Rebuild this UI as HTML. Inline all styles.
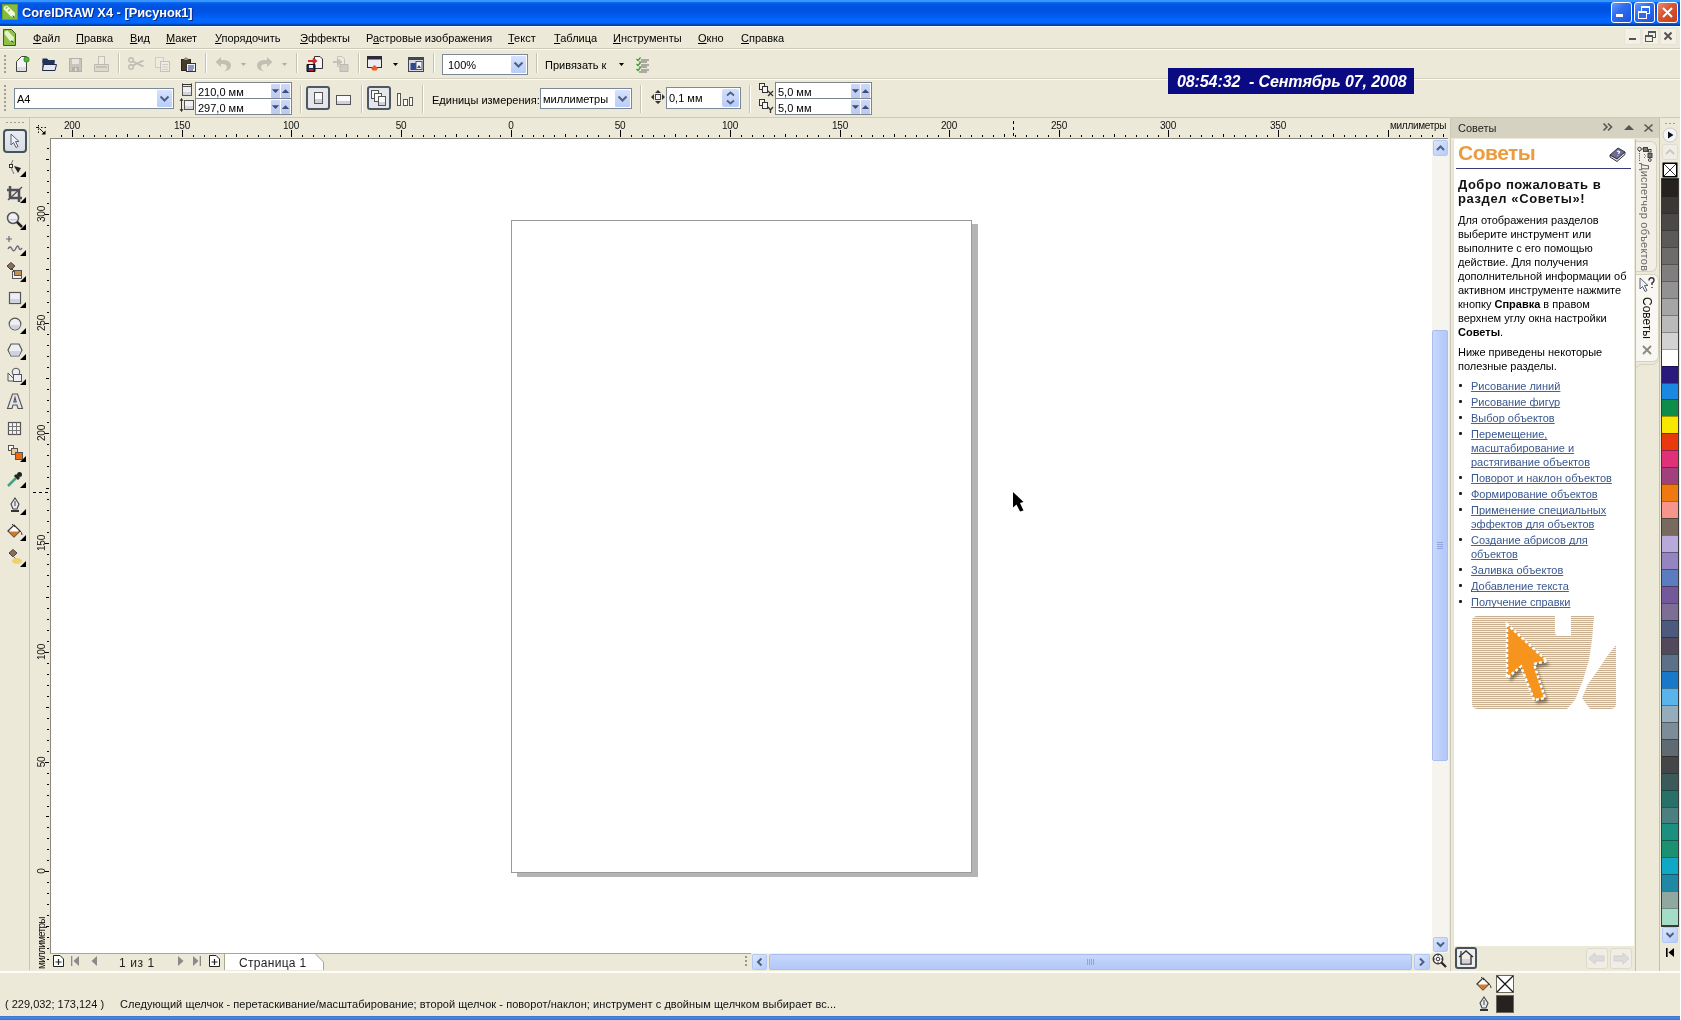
<!DOCTYPE html>
<html><head><meta charset="utf-8">
<style>
*{margin:0;padding:0;box-sizing:border-box}
html,body{width:1681px;height:1020px;overflow:hidden;background:#fff}
body{position:relative;font-family:"Liberation Sans",sans-serif;font-size:11px;color:#000;line-height:1}
.a{position:absolute}
svg{position:absolute;overflow:visible}
.t{position:absolute;white-space:nowrap;line-height:1;will-change:transform}
.rul b{will-change:transform}
#title{left:0;top:0;width:1680px;height:26px;background:linear-gradient(#3a96ff 0,#3a96ff 1.5px,#0a68ee 2.5px,#0058e6 4px,#0052df 8px,#0054e4 12px,#005cf2 16px,#0066ff 19px,#0066fd 23px,#0a3a9a 25px,#0a3a9a 26px)}
.menu .t{top:33px}
.sepv{position:absolute;width:2px;border-left:1px solid #c6c3b3;border-right:1px solid #fff}
.rul i{position:absolute;background:#000;display:block}
.rul b.hl{position:absolute;top:121px;width:40px;text-align:center;font-weight:normal;font-size:10px;line-height:10px;letter-spacing:-0.2px;color:#111}
.rul b.vl{position:absolute;left:22px;width:40px;height:10px;text-align:center;font-weight:normal;font-size:10px;line-height:10px;letter-spacing:-0.2px;color:#111;transform-origin:20px 5px;transform:translate(0,15px) rotate(-90deg)}
.spin{position:absolute;background:#fff;border:1px solid #8c9cb8}
.sbtn{position:absolute;background:#c5d3f6;border-radius:1px}
.combo{position:absolute;background:#fff;border:1px solid #7f9db9}
.cbtn{position:absolute;background:#c1d3fb;border-radius:1px}
.docker .t{left:1458px;font-size:11px;color:#000}
.links .t{left:1471px;font-size:11px;color:#3a5890;text-decoration:underline;text-decoration-color:#4e6290;text-decoration-skip-ink:none}
.links b{position:absolute;left:1459px;width:3px;height:3px;background:#222;border-radius:1px}
u{text-decoration-skip-ink:none}

</style></head><body>
<div class="a" style="left:0;top:0;width:1680px;height:1016px;background:#ece9d8"></div>
<div id="title" class="a"></div>
<div class="a" style="left:1680px;top:0;width:1px;height:1020px;background:#fff"></div>
<div class="a" style="left:0;top:1016px;width:1680px;height:4px;background:linear-gradient(#3a64b0 0,#4a8ae6 1px,#3f85e4 2px,#2f78dc 4px)"></div>
<!-- title -->
<svg style="left:2px;top:4px" width="16" height="16" viewBox="0 0 16 16"><rect x="0.5" y="0.5" width="15" height="15" fill="#86bc3e" stroke="#6a9e2c"/><path d="M2 3 L5 1.5 L13 9 L12.5 13 L9 12.5 L1.5 5 Z" fill="#f4f8e0"/><path d="M3.5 4.5 L5.5 3 M6 7 L8 5.5" stroke="#86bc3e" stroke-width="1.2"/><path d="M10.5 11 L13 13.5 L11 13.2Z" fill="#2a4a10"/></svg>
<div class="t" style="left:22px;top:7px;color:#fff;font-size:12.8px;font-weight:bold;text-shadow:1px 1px 0 #0a2a8a">CorelDRAW X4 - [Рисунок1]</div>
<div class="a" style="left:1611px;top:2px;width:21px;height:21px;background:linear-gradient(135deg,#6d9af8 0,#2f6df0 40%,#1a55dd 100%);border:1px solid #fff;border-radius:3px"></div><div class="a" style="left:1616px;top:14px;width:7px;height:3px;background:#fff"></div><div class="a" style="left:1634px;top:2px;width:21px;height:21px;background:linear-gradient(135deg,#6d9af8 0,#2f6df0 40%,#1a55dd 100%);border:1px solid #fff;border-radius:3px"></div><svg style="left:1634px;top:2px" width="21" height="21" viewBox="0 0 21 21"><rect x="7.5" y="4.5" width="8" height="7" fill="none" stroke="#fff" stroke-width="1"/><rect x="7" y="4" width="9" height="2" fill="#fff"/><rect x="4.5" y="9.5" width="8" height="7" fill="#3567e8" stroke="#fff" stroke-width="1"/><rect x="4" y="9" width="9" height="2" fill="#fff"/></svg><div class="a" style="left:1657px;top:2px;width:21px;height:21px;background:linear-gradient(135deg,#e88a70 0,#d9532f 45%,#c2401d 100%);border:1px solid #fff;border-radius:3px"></div><svg style="left:1657px;top:2px" width="21" height="21" viewBox="0 0 21 21"><path d="M6 6 L15 15 M15 6 L6 15" stroke="#fff" stroke-width="2"/></svg>
<!-- menu bar -->
<div class="a" style="left:0;top:26px;width:1680px;height:1px;background:#ecfcff"></div>
<svg style="left:3px;top:29px" width="13" height="17" viewBox="0 0 13 17"><path d="M0.5 0.5 H8.5 L12.5 4.5 V16.5 H0.5 Z" fill="#8cc04a" stroke="#3e5a1e"/><path d="M2 2.5 L4.5 1.5 L11 8.5 L10.5 13 L7 12 L1.5 5Z" fill="#e6f2c8"/><path d="M8.5 11 L11 13.5 L8.5 13Z" fill="#1e3a0a"/></svg>
<div class="menu">
<div class="t" style="left:33px"><u>Ф</u>айл</div>
<div class="t" style="left:76px"><u>П</u>равка</div>
<div class="t" style="left:130px"><u>В</u>ид</div>
<div class="t" style="left:166px"><u>М</u>акет</div>
<div class="t" style="left:215px"><u>У</u>порядочить</div>
<div class="t" style="left:300px"><u>Э</u>ффекты</div>
<div class="t" style="left:366px">Р<u>а</u>стровые изображения</div>
<div class="t" style="left:508px"><u>Т</u>екст</div>
<div class="t" style="left:554px"><u>Т</u>аблица</div>
<div class="t" style="left:613px"><u>И</u>нструменты</div>
<div class="t" style="left:698px"><u>О</u>кно</div>
<div class="t" style="left:741px"><u>С</u>правка</div>
</div>
<div class="a" style="left:1624px;top:28px;width:17px;height:17px;background:#f3f1e6;border:1px solid #e6e3d6;border-radius:2px"></div><div class="a" style="left:1629px;top:38px;width:7px;height:2px;background:#545454"></div><div class="a" style="left:1642px;top:28px;width:17px;height:17px;background:#f3f1e6;border:1px solid #e6e3d6;border-radius:2px"></div><svg style="left:1642px;top:28px" width="17" height="17" viewBox="0 0 17 17"><rect x="6.5" y="3.5" width="7" height="6" fill="none" stroke="#545454"/><rect x="6" y="3" width="8" height="2" fill="#545454"/><rect x="3.5" y="7.5" width="7" height="6" fill="#f3f1e6" stroke="#545454"/><rect x="3" y="7" width="8" height="2" fill="#545454"/></svg><div class="a" style="left:1660px;top:28px;width:17px;height:17px;background:#f3f1e6;border:1px solid #e6e3d6;border-radius:2px"></div><svg style="left:1660px;top:28px" width="17" height="17" viewBox="0 0 17 17"><path d="M4.5 4.5 L11.5 11.5 M11.5 4.5 L4.5 11.5" stroke="#545454" stroke-width="2"/></svg>
<div class="a" style="left:0;top:48px;width:1680px;height:1px;background:#cdcab9"></div>
<div class="a" style="left:0;top:49px;width:1680px;height:1px;background:#fbfaf5"></div>
<!-- toolbar 1 -->
<div class="a" style="left:4px;top:55px;width:2px;height:2px;background:#a19e8f"></div><div class="a" style="left:4px;top:59px;width:2px;height:2px;background:#a19e8f"></div><div class="a" style="left:4px;top:63px;width:2px;height:2px;background:#a19e8f"></div><div class="a" style="left:4px;top:67px;width:2px;height:2px;background:#a19e8f"></div><div class="a" style="left:4px;top:71px;width:2px;height:2px;background:#a19e8f"></div><svg style="left:16px;top:56px" width="14" height="16" viewBox="0 0 14 16"><path d="M0.5 5.5 L5.5 0.5 H10.5 V15.5 H0.5Z" fill="#f4f4f6" stroke="#404040"/><path d="M1 11 H10 V15 H1Z" fill="#dcdce4"/><circle cx="10.5" cy="3.5" r="3" fill="#3aa02a"/><circle cx="10.5" cy="3.5" r="1.5" fill="#55c040"/></svg><svg style="left:42px;top:57px" width="15" height="14" viewBox="0 0 15 14"><path d="M0.5 1.5 H5 L6.5 3 H12.5 V6 H0.5Z" fill="#1c2b4c"/><path d="M0.5 3 H12.5 V13.5 H0.5Z" fill="#22345a"/><path d="M1.5 7.5 H14.5 L13 13.5 H0.5Z" fill="#e6e6f0" stroke="#1c2b4c"/></svg><svg style="left:69px;top:58px" width="13" height="14" viewBox="0 0 13 14"><rect x="0.5" y="0.5" width="12" height="13" fill="#c8c6bc" stroke="#b4b2a8"/><rect x="3" y="1" width="7" height="5" fill="#e8e6dc"/><rect x="3" y="9" width="7" height="4" fill="#b4b2a8"/><rect x="6" y="10" width="1.5" height="3" fill="#e8e6dc"/></svg><svg style="left:94px;top:56px" width="15" height="16" viewBox="0 0 15 16"><rect x="4.5" y="0.5" width="6" height="8" fill="#eeece2" stroke="#c4c2b6"/><path d="M0.5 8.5 H14.5 V15.5 H0.5Z" fill="#dddbd0" stroke="#bcbab0"/><rect x="2" y="10" width="11" height="2" fill="#c4c2b6"/></svg><div class="a" style="left:118px;top:53px;width:1px;height:20px;background:#c5c2b1"></div><div class="a" style="left:119px;top:53px;width:1px;height:20px;background:#fff"></div><svg style="left:128px;top:57px" width="16" height="13" viewBox="0 0 16 13"><circle cx="3" cy="3" r="2.3" fill="none" stroke="#bdbbb0" stroke-width="1.4"/><circle cx="3" cy="10" r="2.3" fill="none" stroke="#bdbbb0" stroke-width="1.4"/><path d="M5 4.5 L15.5 9.5 M5 8.5 L15.5 3.5" stroke="#bdbbb0" stroke-width="1.5"/></svg><svg style="left:155px;top:57px" width="15" height="15" viewBox="0 0 15 15"><rect x="0.5" y="0.5" width="8" height="10" fill="#eeece2" stroke="#cfcdc2"/><rect x="5.5" y="4.5" width="9" height="10" fill="#eeece2" stroke="#c4c2b6"/><path d="M7 7.5H13M7 10H13M7 12.5H13" stroke="#cfcdc2"/></svg><svg style="left:181px;top:57px" width="15" height="15" viewBox="0 0 15 15"><rect x="0.5" y="2.5" width="9" height="11" fill="#4a3c2c" stroke="#2c2418"/><path d="M2.5 3 Q5 -1 7.5 3Z" fill="#f0f0f0" stroke="#333" stroke-width="0.8"/><rect x="5.5" y="6.5" width="9" height="8" fill="#f4f4f8" stroke="#333"/><path d="M7 9H13M7 11H13M7 13H12" stroke="#2a3a80" stroke-width="1"/></svg><div class="a" style="left:205px;top:53px;width:1px;height:20px;background:#c5c2b1"></div><div class="a" style="left:206px;top:53px;width:1px;height:20px;background:#fff"></div><svg style="left:215px;top:56px" width="17" height="16" viewBox="0 0 17 16"><path d="M6 1 L0.5 6 L6 11 V8 Q12 7.5 12 11.5 Q11.5 14.5 9 15.5 Q16.5 14 16 9 Q15.5 3.5 6 4Z" fill="#c2c0b4"/></svg><svg style="left:241px;top:63px" width="6" height="4" viewBox="0 0 6 4"><path d="M0 0 H5 L2.5 3Z" fill="#b0ae9f"/></svg><svg style="left:256px;top:56px" width="17" height="16" viewBox="0 0 17 16"><path d="M11 1 L16.5 6 L11 11 V8 Q5 7.5 5 11.5 Q5.5 14.5 8 15.5 Q0.5 14 1 9 Q1.5 3.5 11 4Z" fill="#c2c0b4"/></svg><svg style="left:282px;top:63px" width="6" height="4" viewBox="0 0 6 4"><path d="M0 0 H5 L2.5 3Z" fill="#b0ae9f"/></svg><div class="a" style="left:296px;top:53px;width:1px;height:20px;background:#c5c2b1"></div><div class="a" style="left:297px;top:53px;width:1px;height:20px;background:#fff"></div><svg style="left:306px;top:56px" width="17" height="16" viewBox="0 0 17 16"><path d="M8.5 0.5 H14 L16.5 3 V12.5 H8.5Z" fill="#f4f4f6" stroke="#333"/><path d="M1 8.5 H9 V15.5 H1Z" fill="#203060" stroke="#111"/><rect x="3" y="9" width="4" height="3" fill="#f0f0f0"/><rect x="3" y="13" width="4" height="2" fill="#c02020"/><path d="M2 5 H9 M7 2.5 L10 5 L7 7.5" stroke="#d02828" stroke-width="2" fill="none"/></svg><svg style="left:332px;top:56px" width="17" height="16" viewBox="0 0 17 16"><path d="M5.5 0.5 H10 L12.5 3 V10.5 H5.5Z" fill="#eeece2" stroke="#c4c2b6"/><path d="M8 8.5 H16 V15.5 H8Z" fill="#cfcdc2" stroke="#bcbab0"/><path d="M1 6 H8 M6 3.5 L9 6 L6 8.5" stroke="#c4c2b6" stroke-width="2" fill="none"/></svg><div class="a" style="left:358px;top:53px;width:1px;height:20px;background:#c5c2b1"></div><div class="a" style="left:359px;top:53px;width:1px;height:20px;background:#fff"></div><svg style="left:367px;top:56px" width="15" height="15" viewBox="0 0 15 15"><rect x="0.5" y="0.5" width="14" height="11" fill="#ececf2" stroke="#2a2a3a"/><rect x="1" y="1" width="13" height="2.5" fill="#2a2a3a"/><path d="M4 12 L7.5 9 L11 12 L9.5 14.5 H5.5Z" fill="#ee5a2a"/></svg><svg style="left:393px;top:63px" width="6" height="4" viewBox="0 0 6 4"><path d="M0 0 H5 L2.5 3Z" fill="#000"/></svg><svg style="left:408px;top:57px" width="16" height="15" viewBox="0 0 16 15"><rect x="0.5" y="0.5" width="15" height="14" fill="#d8d8e4" stroke="#404858"/><rect x="1" y="1" width="14" height="2" fill="#404858"/><rect x="2.5" y="6" width="6" height="7" fill="#2e4a8a"/><rect x="8" y="4.5" width="6" height="8" fill="#f4f4f8" stroke="#555"/><path d="M9 11 L11 8 L13 11Z" fill="#2e4a8a"/></svg><div class="a" style="left:433px;top:53px;width:1px;height:20px;background:#c5c2b1"></div><div class="a" style="left:434px;top:53px;width:1px;height:20px;background:#fff"></div><div class="a" style="left:442px;top:54px;width:86px;height:21px;background:#fff;border:1px solid #7c8898"></div><div class="a" style="left:511px;top:56px;width:15px;height:17px;background:linear-gradient(#d7e2fd,#b8cdf8);border-radius:1px"></div><svg style="left:511px;top:56px" width="15" height="17" viewBox="0 0 15 17"><path d="M3.5 6.5 L7.5 10.5 L11.5 6.5" fill="none" stroke="#4d6185" stroke-width="2"/></svg><div class="t" style="left:448px;top:60px">100%</div><div class="a" style="left:536px;top:53px;width:1px;height:20px;background:#c5c2b1"></div><div class="a" style="left:537px;top:53px;width:1px;height:20px;background:#fff"></div><div class="t" style="left:545px;top:60px">Привязать к</div><svg style="left:619px;top:63px" width="6" height="4" viewBox="0 0 6 4"><path d="M0 0 H5 L2.5 3Z" fill="#000"/></svg><svg style="left:636px;top:57px" width="13" height="16" viewBox="0 0 13 16"><path d="M0.5 2 L2 3.5 L4.5 0.5 M0.5 7 L2 8.5 L4.5 5.5 M0.5 12 L2 13.5 L4.5 10.5" stroke="#3c9a32" fill="none" stroke-width="1.2"/><path d="M5 3H13M3 5H11M5 8H13M3 10H11M5 13H13M3 15H11" stroke="#6a6a6a" stroke-width="1"/></svg>
<div class="a" style="left:0;top:78px;width:1680px;height:1px;background:#d3d0bf"></div>
<div class="a" style="left:0;top:79px;width:1680px;height:1px;background:#fbfaf5"></div>
<!-- toolbar 2 -->
<div class="a" style="left:4px;top:85px;width:2px;height:2px;background:#a19e8f"></div><div class="a" style="left:4px;top:89px;width:2px;height:2px;background:#a19e8f"></div><div class="a" style="left:4px;top:93px;width:2px;height:2px;background:#a19e8f"></div><div class="a" style="left:4px;top:97px;width:2px;height:2px;background:#a19e8f"></div><div class="a" style="left:4px;top:101px;width:2px;height:2px;background:#a19e8f"></div><div class="a" style="left:4px;top:105px;width:2px;height:2px;background:#a19e8f"></div><div class="a" style="left:4px;top:109px;width:2px;height:2px;background:#a19e8f"></div><div class="a" style="left:14px;top:88px;width:160px;height:21px;background:#fff;border:1px solid #7c8898"></div><div class="a" style="left:157px;top:90px;width:15px;height:17px;background:linear-gradient(#d7e2fd,#b8cdf8);border-radius:1px"></div><svg style="left:157px;top:90px" width="15" height="17" viewBox="0 0 15 17"><path d="M3.5 6.5 L7.5 10.5 L11.5 6.5" fill="none" stroke="#4d6185" stroke-width="2"/></svg><div class="t" style="left:17px;top:94px">A4</div><svg style="left:181px;top:83px" width="12" height="13" viewBox="0 0 12 13"><path d="M1.5 0.5 V3 M10.5 0.5 V3 M1.5 1.5 H10.5" stroke="#333"/><rect x="1.5" y="3.5" width="9" height="9" fill="#f0f0f0" stroke="#555"/><rect x="2" y="9" width="8" height="3" fill="#d4d4dc"/></svg><svg style="left:180px;top:98px" width="14" height="14" viewBox="0 0 14 14"><path d="M1.5 1 V13 M0 3 L1.5 0.5 L3 3 M0 11 L1.5 13.5 L3 11" stroke="#333" fill="none"/><rect x="4.5" y="2.5" width="9" height="9" fill="#f0f0f0" stroke="#555"/><rect x="5" y="8" width="8" height="3" fill="#d4d4dc"/></svg><div class="a" style="left:195px;top:82px;width:97px;height:33px;background:#fff;border:1px solid #7c8490"></div><div class="a" style="left:196px;top:98px;width:95px;height:1px;background:#7c8490"></div><div class="a" style="left:271px;top:84px;width:9px;height:14px;background:linear-gradient(#cdd8f6,#bccaf0);border-radius:1px"></div><div class="a" style="left:281px;top:84px;width:9px;height:14px;background:linear-gradient(#cdd8f6,#bccaf0);border-radius:1px"></div><svg style="left:271px;top:84px" width="9" height="14" viewBox="0 0 9 14"><path d="M0.8 5.2 H8.2 L4.5 9Z" fill="#3a4f80"/></svg><svg style="left:281px;top:84px" width="9" height="14" viewBox="0 0 9 14"><path d="M0.8 9 H8.2 L4.5 5.2Z" fill="#3a4f80"/></svg><div class="t" style="left:198px;top:87px">210,0 мм</div><div class="a" style="left:271px;top:100px;width:9px;height:14px;background:linear-gradient(#cdd8f6,#bccaf0);border-radius:1px"></div><div class="a" style="left:281px;top:100px;width:9px;height:14px;background:linear-gradient(#cdd8f6,#bccaf0);border-radius:1px"></div><svg style="left:271px;top:100px" width="9" height="14" viewBox="0 0 9 14"><path d="M0.8 5.2 H8.2 L4.5 9Z" fill="#3a4f80"/></svg><svg style="left:281px;top:100px" width="9" height="14" viewBox="0 0 9 14"><path d="M0.8 9 H8.2 L4.5 5.2Z" fill="#3a4f80"/></svg><div class="t" style="left:198px;top:103px">297,0 мм</div><div class="a" style="left:300px;top:85px;width:1px;height:28px;background:#c5c2b1"></div><div class="a" style="left:301px;top:85px;width:1px;height:28px;background:#fff"></div><div class="a" style="left:306px;top:86px;width:24px;height:24px;background:#e4e6ea;border:2px solid #4c5866;border-radius:3px"></div><svg style="left:306px;top:86px" width="24" height="24" viewBox="0 0 24 24"><rect x="8.5" y="6.5" width="8" height="11" fill="#fafafa" stroke="#555"/><rect x="9" y="13" width="7" height="4" fill="#d0d0d8"/></svg><svg style="left:336px;top:94px" width="15" height="12" viewBox="0 0 15 12"><rect x="0.5" y="1.5" width="14" height="9" fill="#fafafa" stroke="#555"/><rect x="1" y="7" width="13" height="3" fill="#d0d0d8"/></svg><div class="a" style="left:361px;top:85px;width:1px;height:28px;background:#c5c2b1"></div><div class="a" style="left:362px;top:85px;width:1px;height:28px;background:#fff"></div><div class="a" style="left:367px;top:86px;width:24px;height:24px;background:#e4e6ea;border:2px solid #4c5866;border-radius:3px"></div><svg style="left:367px;top:86px" width="24" height="24" viewBox="0 0 24 24"><rect x="4.5" y="4.5" width="7" height="8" fill="#fafafa" stroke="#555"/><rect x="7.5" y="7.5" width="7" height="8" fill="#fafafa" stroke="#555"/><rect x="11.5" y="10.5" width="7" height="9" fill="#fafafa" stroke="#555"/><rect x="12" y="16" width="6" height="3" fill="#d0d0d8"/></svg><svg style="left:397px;top:93px" width="16" height="13" viewBox="0 0 16 13"><rect x="0.5" y="0.5" width="3" height="12" fill="#fafafa" stroke="#555"/><rect x="6.5" y="6.5" width="4" height="6" fill="#fafafa" stroke="#555"/><rect x="12.5" y="4.5" width="3" height="8" fill="#fafafa" stroke="#555"/></svg><div class="a" style="left:422px;top:85px;width:1px;height:28px;background:#c5c2b1"></div><div class="a" style="left:423px;top:85px;width:1px;height:28px;background:#fff"></div><div class="t" style="left:432px;top:95px">Единицы измерения:</div><div class="a" style="left:540px;top:88px;width:92px;height:21px;background:#fff;border:1px solid #7c8898"></div><div class="a" style="left:615px;top:90px;width:15px;height:17px;background:linear-gradient(#d7e2fd,#b8cdf8);border-radius:1px"></div><svg style="left:615px;top:90px" width="15" height="17" viewBox="0 0 15 17"><path d="M3.5 6.5 L7.5 10.5 L11.5 6.5" fill="none" stroke="#4d6185" stroke-width="2"/></svg><div class="t" style="left:543px;top:94px">миллиметры</div><div class="a" style="left:640px;top:85px;width:1px;height:28px;background:#c5c2b1"></div><div class="a" style="left:641px;top:85px;width:1px;height:28px;background:#fff"></div><svg style="left:651px;top:90px" width="14" height="14" viewBox="0 0 14 14"><path d="M7 0 L10 3 H4Z M7 14 L10 11 H4Z M0 7 L3 4 V10Z M14 7 L11 4 V10Z" fill="#333"/><rect x="4.5" y="4.5" width="5" height="5" fill="#f4f4f4" stroke="#444"/></svg><div class="a" style="left:666px;top:87px;width:75px;height:22px;background:#fff;border:1px solid #7c8898"></div><div class="a" style="left:722px;top:89px;width:17px;height:18px;background:linear-gradient(#d4dffc,#b9cbf6);border-radius:2px"></div><svg style="left:722px;top:89px" width="17" height="18" viewBox="0 0 17 18"><path d="M5 6.5 L8.5 3.5 L12 6.5 M5 11.5 L8.5 14.5 L12 11.5" fill="none" stroke="#4d6185" stroke-width="1.8"/></svg><div class="t" style="left:669px;top:93px">0,1 мм</div><div class="a" style="left:749px;top:85px;width:1px;height:28px;background:#c5c2b1"></div><div class="a" style="left:750px;top:85px;width:1px;height:28px;background:#fff"></div><svg style="left:759px;top:83px" width="16" height="14" viewBox="0 0 16 14"><rect x="0.5" y="0.5" width="5" height="6" fill="#f4f4f4" stroke="#333"/><rect x="3.5" y="3.5" width="5" height="6" fill="#f4f4f4" stroke="#333"/><path d="M9 8 L14 13 M14 8 L9 13" stroke="#333" stroke-width="1.3"/></svg><svg style="left:759px;top:99px" width="16" height="15" viewBox="0 0 16 15"><rect x="0.5" y="0.5" width="5" height="6" fill="#f4f4f4" stroke="#333"/><rect x="3.5" y="3.5" width="5" height="6" fill="#f4f4f4" stroke="#333"/><path d="M9 8 L11.5 11 L14 8 M11.5 11 V14" stroke="#333" stroke-width="1.3" fill="none"/></svg><div class="a" style="left:775px;top:82px;width:97px;height:33px;background:#fff;border:1px solid #7c8490"></div><div class="a" style="left:776px;top:98px;width:95px;height:1px;background:#7c8490"></div><div class="a" style="left:851px;top:84px;width:9px;height:14px;background:linear-gradient(#cdd8f6,#bccaf0);border-radius:1px"></div><div class="a" style="left:861px;top:84px;width:9px;height:14px;background:linear-gradient(#cdd8f6,#bccaf0);border-radius:1px"></div><svg style="left:851px;top:84px" width="9" height="14" viewBox="0 0 9 14"><path d="M0.8 5.2 H8.2 L4.5 9Z" fill="#3a4f80"/></svg><svg style="left:861px;top:84px" width="9" height="14" viewBox="0 0 9 14"><path d="M0.8 9 H8.2 L4.5 5.2Z" fill="#3a4f80"/></svg><div class="t" style="left:778px;top:87px">5,0 мм</div><div class="a" style="left:851px;top:100px;width:9px;height:14px;background:linear-gradient(#cdd8f6,#bccaf0);border-radius:1px"></div><div class="a" style="left:861px;top:100px;width:9px;height:14px;background:linear-gradient(#cdd8f6,#bccaf0);border-radius:1px"></div><svg style="left:851px;top:100px" width="9" height="14" viewBox="0 0 9 14"><path d="M0.8 5.2 H8.2 L4.5 9Z" fill="#3a4f80"/></svg><svg style="left:861px;top:100px" width="9" height="14" viewBox="0 0 9 14"><path d="M0.8 9 H8.2 L4.5 5.2Z" fill="#3a4f80"/></svg><div class="t" style="left:778px;top:103px">5,0 мм</div>
<div class="a" style="left:0;top:117px;width:1680px;height:1px;background:#cdcab9"></div>
<!-- clock -->
<div class="a" style="left:1168px;top:68px;width:246px;height:26px;background:#0a0a82"></div>
<div class="t" style="left:1177px;top:74px;color:#fff;font-size:16px;font-weight:bold;font-style:italic;letter-spacing:-0.1px">08:54:32&nbsp; - Сентябрь 07, 2008</div>
<!-- toolbox -->
<div class="a" style="left:29px;top:118px;width:1px;height:852px;background:#c9c6b6"></div>
<div class="a" style="left:6px;top:122px;width:2px;height:1px;background:#a19e8f"></div><div class="a" style="left:10px;top:122px;width:2px;height:1px;background:#a19e8f"></div><div class="a" style="left:14px;top:122px;width:2px;height:1px;background:#a19e8f"></div><div class="a" style="left:18px;top:122px;width:2px;height:1px;background:#a19e8f"></div><div class="a" style="left:22px;top:122px;width:2px;height:1px;background:#a19e8f"></div><div class="a" style="left:3px;top:129px;width:24px;height:24px;background:linear-gradient(#e8ecf0,#d8dde4);border:2px solid #45535e;border-radius:4px"></div><svg style="left:10px;top:133px" width="10" height="16" viewBox="0 0 10 16"><path d="M1 1 L1 12 L3.5 9.5 L6 14.5 L8 13.5 L5.5 8.5 L9 8.5Z" fill="#eef0fa" stroke="#5a6274" stroke-width="1"/></svg><svg style="left:8px;top:159px" width="18" height="18" viewBox="0 0 18 18"><path d="M5 1 Q1 7 6 15" fill="none" stroke="#777" stroke-width="1"/><rect x="1.5" y="5.5" width="3" height="3" fill="#fff" stroke="#333"/><path d="M6 7 L13 9 L10 14Z" fill="#222"/></svg><svg style="left:20px;top:171px" width="6" height="6" viewBox="0 0 6 6"><path d="M6 0 V6 H0Z" fill="#000"/></svg><svg style="left:7px;top:186px" width="16" height="16" viewBox="0 0 16 16"><path d="M3 0 V12 H15 M0 4 H12 V16" fill="none" stroke="#50505a" stroke-width="2.5"/><path d="M1 14 L15 1" stroke="#50505a" stroke-width="1.3"/></svg><svg style="left:20px;top:197px" width="6" height="6" viewBox="0 0 6 6"><path d="M6 0 V6 H0Z" fill="#000"/></svg><svg style="left:6px;top:211px" width="19" height="19" viewBox="0 0 19 19"><circle cx="7" cy="7" r="5.5" fill="#f0f0f6" stroke="#555" stroke-width="1.5"/><path d="M2.5 8 Q7 11 11.5 8" fill="#c4c8dc"/><path d="M11 11 L16 16" stroke="#222" stroke-width="2.5"/></svg><svg style="left:20px;top:224px" width="6" height="6" viewBox="0 0 6 6"><path d="M6 0 V6 H0Z" fill="#000"/></svg><svg style="left:6px;top:236px" width="19" height="19" viewBox="0 0 19 19"><path d="M3 0 V6 M0 3 H6" stroke="#6a6a7a" stroke-width="1.2"/><path d="M2 13 Q4 9 6 13 Q8 17 10 12 Q12 8 13 12 Q14 15 16 12" fill="none" stroke="#6a6a7a" stroke-width="1.4"/></svg><svg style="left:20px;top:250px" width="6" height="6" viewBox="0 0 6 6"><path d="M6 0 V6 H0Z" fill="#000"/></svg><svg style="left:6px;top:262px" width="19" height="19" viewBox="0 0 19 19"><path d="M1 4 L5 0.5 L9 4 L5 8Z" fill="#8a6e5a" stroke="#444"/><path d="M5 6 L9 10" stroke="#444"/><rect x="6.5" y="9.5" width="9" height="7" fill="#f4f4f4" stroke="#555"/><rect x="8.5" y="8.5" width="7" height="5" fill="#c09050" stroke="#555"/></svg><svg style="left:20px;top:276px" width="6" height="6" viewBox="0 0 6 6"><path d="M6 0 V6 H0Z" fill="#000"/></svg><svg style="left:8px;top:291px" width="14" height="14" viewBox="0 0 14 14"><rect x="1.5" y="1.5" width="11" height="11" fill="#eeeef4" stroke="#555" stroke-width="1.2"/><rect x="2" y="8" width="10" height="4" fill="#d0d2e0"/></svg><svg style="left:20px;top:302px" width="6" height="6" viewBox="0 0 6 6"><path d="M6 0 V6 H0Z" fill="#000"/></svg><svg style="left:8px;top:317px" width="14" height="14" viewBox="0 0 14 14"><circle cx="7" cy="7" r="5.8" fill="#eeeef4" stroke="#555" stroke-width="1.2"/><path d="M1.5 8 H12.5 Q11 12.5 7 12.7 Q3 12.5 1.5 8Z" fill="#d0d2e0"/></svg><svg style="left:20px;top:328px" width="6" height="6" viewBox="0 0 6 6"><path d="M6 0 V6 H0Z" fill="#000"/></svg><svg style="left:7px;top:343px" width="16" height="14" viewBox="0 0 16 14"><path d="M4 1 H12 L15 7 L12 13 H4 L1 7Z" fill="#eeeef4" stroke="#555" stroke-width="1.2"/><path d="M2 8 H14 L12 12.5 H4Z" fill="#d0d2e0"/></svg><svg style="left:20px;top:354px" width="6" height="6" viewBox="0 0 6 6"><path d="M6 0 V6 H0Z" fill="#000"/></svg><svg style="left:7px;top:367px" width="16" height="16" viewBox="0 0 16 16"><path d="M1 6 V14 H9Z" fill="#eee" stroke="#555"/><circle cx="9" cy="5" r="3.8" fill="#eeeef4" stroke="#555"/><rect x="6.5" y="7.5" width="8" height="7" fill="#eeeef4" stroke="#555"/></svg><svg style="left:20px;top:379px" width="6" height="6" viewBox="0 0 6 6"><path d="M6 0 V6 H0Z" fill="#000"/></svg><svg style="left:7px;top:393px" width="16" height="17" viewBox="0 0 16 17"><path d="M5.5 1 H10.5 L15.5 15.5 H11 L10 12 H6 L5 15.5 H0.5Z M6.8 9 H9.2 L8 4.5Z" fill="#e6e6ee" stroke="#555" stroke-width="1.1" fill-rule="evenodd"/></svg><svg style="left:7px;top:421px" width="15" height="15" viewBox="0 0 15 15"><rect x="1.5" y="1.5" width="12" height="12" fill="#f4f4f8" stroke="#555" stroke-width="1.2"/><path d="M1.5 5.5 H13.5 M1.5 9.5 H13.5 M5.5 1.5 V13.5 M9.5 1.5 V13.5" stroke="#777" stroke-width="1"/></svg><svg style="left:7px;top:445px" width="18" height="17" viewBox="0 0 18 17"><rect x="1.5" y="0.5" width="5" height="5" fill="#fff" stroke="#555"/><rect x="4.5" y="3.5" width="6" height="6" fill="#f0c890" stroke="#555"/><rect x="8.5" y="7.5" width="7" height="7" fill="#f06a10" stroke="#555"/></svg><svg style="left:20px;top:456px" width="6" height="6" viewBox="0 0 6 6"><path d="M6 0 V6 H0Z" fill="#000"/></svg><svg style="left:7px;top:471px" width="16" height="17" viewBox="0 0 16 17"><path d="M1 15 L9 7" stroke="#4aa080" stroke-width="2.5"/><path d="M8 4 L12 8" stroke="#222" stroke-width="3"/><circle cx="12.5" cy="3.5" r="2.5" fill="#222"/></svg><svg style="left:20px;top:482px" width="6" height="6" viewBox="0 0 6 6"><path d="M6 0 V6 H0Z" fill="#000"/></svg><svg style="left:10px;top:497px" width="11" height="17" viewBox="0 0 11 17"><path d="M5 1 L9 7 L7 12 H3 L1 7Z" fill="#e8e8f2" stroke="#444" stroke-width="1.1"/><path d="M5 4 V9" stroke="#444"/><rect x="1" y="13" width="8" height="2" fill="#333"/></svg><svg style="left:20px;top:509px" width="6" height="6" viewBox="0 0 6 6"><path d="M6 0 V6 H0Z" fill="#000"/></svg><svg style="left:6px;top:523px" width="18" height="17" viewBox="0 0 18 17"><path d="M2 8 L8 2 L14 8 L8 14Z" fill="#fff" stroke="#333" stroke-width="1.2"/><path d="M2.5 8.5 H13.5 L8 14Z" fill="#d0782a"/><path d="M6 1 L9 4 M14 8 Q16 9 16 12" stroke="#333" fill="none"/></svg><svg style="left:20px;top:535px" width="6" height="6" viewBox="0 0 6 6"><path d="M6 0 V6 H0Z" fill="#000"/></svg><svg style="left:8px;top:549px" width="15" height="16" viewBox="0 0 15 16"><path d="M1 4 L5 0.5 L9 4 L5 8Z" fill="#8a6e5a" stroke="#444"/><path d="M5 7 L9 11" stroke="#666"/><ellipse cx="9" cy="12" rx="5" ry="3" fill="#f0d070"/></svg><svg style="left:20px;top:561px" width="6" height="6" viewBox="0 0 6 6"><path d="M6 0 V6 H0Z" fill="#000"/></svg>
<!-- rulers -->
<div class="rul">
<div class="a" style="left:30px;top:138px;width:1420px;height:0"></div>
<div class="a" style="left:50px;top:138px;width:1398px;height:1px;background:#8a887c"></div>
<div class="a" style="left:50px;top:138px;width:1px;height:815px;background:#8a887c"></div>
<i style="left:61px;top:135px;width:1px;height:2px"></i>
<i style="left:72px;top:130px;width:1px;height:7px"></i>
<b class="hl" style="left:52px">200</b>
<i style="left:83px;top:135px;width:1px;height:2px"></i>
<i style="left:94px;top:135px;width:1px;height:2px"></i>
<i style="left:105px;top:135px;width:1px;height:2px"></i>
<i style="left:116px;top:135px;width:1px;height:2px"></i>
<i style="left:127px;top:134px;width:1px;height:3px"></i>
<i style="left:138px;top:135px;width:1px;height:2px"></i>
<i style="left:149px;top:135px;width:1px;height:2px"></i>
<i style="left:160px;top:135px;width:1px;height:2px"></i>
<i style="left:171px;top:135px;width:1px;height:2px"></i>
<i style="left:182px;top:130px;width:1px;height:7px"></i>
<b class="hl" style="left:162px">150</b>
<i style="left:193px;top:135px;width:1px;height:2px"></i>
<i style="left:204px;top:135px;width:1px;height:2px"></i>
<i style="left:215px;top:135px;width:1px;height:2px"></i>
<i style="left:226px;top:135px;width:1px;height:2px"></i>
<i style="left:236px;top:134px;width:1px;height:3px"></i>
<i style="left:247px;top:135px;width:1px;height:2px"></i>
<i style="left:258px;top:135px;width:1px;height:2px"></i>
<i style="left:269px;top:135px;width:1px;height:2px"></i>
<i style="left:280px;top:135px;width:1px;height:2px"></i>
<i style="left:291px;top:130px;width:1px;height:7px"></i>
<b class="hl" style="left:271px">100</b>
<i style="left:302px;top:135px;width:1px;height:2px"></i>
<i style="left:313px;top:135px;width:1px;height:2px"></i>
<i style="left:324px;top:135px;width:1px;height:2px"></i>
<i style="left:335px;top:135px;width:1px;height:2px"></i>
<i style="left:346px;top:134px;width:1px;height:3px"></i>
<i style="left:357px;top:135px;width:1px;height:2px"></i>
<i style="left:368px;top:135px;width:1px;height:2px"></i>
<i style="left:379px;top:135px;width:1px;height:2px"></i>
<i style="left:390px;top:135px;width:1px;height:2px"></i>
<i style="left:401px;top:130px;width:1px;height:7px"></i>
<b class="hl" style="left:381px">50</b>
<i style="left:412px;top:135px;width:1px;height:2px"></i>
<i style="left:423px;top:135px;width:1px;height:2px"></i>
<i style="left:434px;top:135px;width:1px;height:2px"></i>
<i style="left:445px;top:135px;width:1px;height:2px"></i>
<i style="left:456px;top:134px;width:1px;height:3px"></i>
<i style="left:467px;top:135px;width:1px;height:2px"></i>
<i style="left:478px;top:135px;width:1px;height:2px"></i>
<i style="left:489px;top:135px;width:1px;height:2px"></i>
<i style="left:500px;top:135px;width:1px;height:2px"></i>
<i style="left:511px;top:130px;width:1px;height:7px"></i>
<b class="hl" style="left:491px">0</b>
<i style="left:522px;top:135px;width:1px;height:2px"></i>
<i style="left:533px;top:135px;width:1px;height:2px"></i>
<i style="left:543px;top:135px;width:1px;height:2px"></i>
<i style="left:554px;top:135px;width:1px;height:2px"></i>
<i style="left:565px;top:134px;width:1px;height:3px"></i>
<i style="left:576px;top:135px;width:1px;height:2px"></i>
<i style="left:587px;top:135px;width:1px;height:2px"></i>
<i style="left:598px;top:135px;width:1px;height:2px"></i>
<i style="left:609px;top:135px;width:1px;height:2px"></i>
<i style="left:620px;top:130px;width:1px;height:7px"></i>
<b class="hl" style="left:600px">50</b>
<i style="left:631px;top:135px;width:1px;height:2px"></i>
<i style="left:642px;top:135px;width:1px;height:2px"></i>
<i style="left:653px;top:135px;width:1px;height:2px"></i>
<i style="left:664px;top:135px;width:1px;height:2px"></i>
<i style="left:675px;top:134px;width:1px;height:3px"></i>
<i style="left:686px;top:135px;width:1px;height:2px"></i>
<i style="left:697px;top:135px;width:1px;height:2px"></i>
<i style="left:708px;top:135px;width:1px;height:2px"></i>
<i style="left:719px;top:135px;width:1px;height:2px"></i>
<i style="left:730px;top:130px;width:1px;height:7px"></i>
<b class="hl" style="left:710px">100</b>
<i style="left:741px;top:135px;width:1px;height:2px"></i>
<i style="left:752px;top:135px;width:1px;height:2px"></i>
<i style="left:763px;top:135px;width:1px;height:2px"></i>
<i style="left:774px;top:135px;width:1px;height:2px"></i>
<i style="left:785px;top:134px;width:1px;height:3px"></i>
<i style="left:796px;top:135px;width:1px;height:2px"></i>
<i style="left:807px;top:135px;width:1px;height:2px"></i>
<i style="left:818px;top:135px;width:1px;height:2px"></i>
<i style="left:829px;top:135px;width:1px;height:2px"></i>
<i style="left:840px;top:130px;width:1px;height:7px"></i>
<b class="hl" style="left:820px">150</b>
<i style="left:851px;top:135px;width:1px;height:2px"></i>
<i style="left:861px;top:135px;width:1px;height:2px"></i>
<i style="left:872px;top:135px;width:1px;height:2px"></i>
<i style="left:883px;top:135px;width:1px;height:2px"></i>
<i style="left:894px;top:134px;width:1px;height:3px"></i>
<i style="left:905px;top:135px;width:1px;height:2px"></i>
<i style="left:916px;top:135px;width:1px;height:2px"></i>
<i style="left:927px;top:135px;width:1px;height:2px"></i>
<i style="left:938px;top:135px;width:1px;height:2px"></i>
<i style="left:949px;top:130px;width:1px;height:7px"></i>
<b class="hl" style="left:929px">200</b>
<i style="left:960px;top:135px;width:1px;height:2px"></i>
<i style="left:971px;top:135px;width:1px;height:2px"></i>
<i style="left:982px;top:135px;width:1px;height:2px"></i>
<i style="left:993px;top:135px;width:1px;height:2px"></i>
<i style="left:1004px;top:134px;width:1px;height:3px"></i>
<i style="left:1015px;top:135px;width:1px;height:2px"></i>
<i style="left:1026px;top:135px;width:1px;height:2px"></i>
<i style="left:1037px;top:135px;width:1px;height:2px"></i>
<i style="left:1048px;top:135px;width:1px;height:2px"></i>
<i style="left:1059px;top:130px;width:1px;height:7px"></i>
<b class="hl" style="left:1039px">250</b>
<i style="left:1070px;top:135px;width:1px;height:2px"></i>
<i style="left:1081px;top:135px;width:1px;height:2px"></i>
<i style="left:1092px;top:135px;width:1px;height:2px"></i>
<i style="left:1103px;top:135px;width:1px;height:2px"></i>
<i style="left:1114px;top:134px;width:1px;height:3px"></i>
<i style="left:1125px;top:135px;width:1px;height:2px"></i>
<i style="left:1136px;top:135px;width:1px;height:2px"></i>
<i style="left:1147px;top:135px;width:1px;height:2px"></i>
<i style="left:1158px;top:135px;width:1px;height:2px"></i>
<i style="left:1168px;top:130px;width:1px;height:7px"></i>
<b class="hl" style="left:1148px">300</b>
<i style="left:1179px;top:135px;width:1px;height:2px"></i>
<i style="left:1190px;top:135px;width:1px;height:2px"></i>
<i style="left:1201px;top:135px;width:1px;height:2px"></i>
<i style="left:1212px;top:135px;width:1px;height:2px"></i>
<i style="left:1223px;top:134px;width:1px;height:3px"></i>
<i style="left:1234px;top:135px;width:1px;height:2px"></i>
<i style="left:1245px;top:135px;width:1px;height:2px"></i>
<i style="left:1256px;top:135px;width:1px;height:2px"></i>
<i style="left:1267px;top:135px;width:1px;height:2px"></i>
<i style="left:1278px;top:130px;width:1px;height:7px"></i>
<b class="hl" style="left:1258px">350</b>
<i style="left:1289px;top:135px;width:1px;height:2px"></i>
<i style="left:1300px;top:135px;width:1px;height:2px"></i>
<i style="left:1311px;top:135px;width:1px;height:2px"></i>
<i style="left:1322px;top:135px;width:1px;height:2px"></i>
<i style="left:1333px;top:134px;width:1px;height:3px"></i>
<i style="left:1344px;top:135px;width:1px;height:2px"></i>
<i style="left:1355px;top:135px;width:1px;height:2px"></i>
<i style="left:1366px;top:135px;width:1px;height:2px"></i>
<i style="left:1377px;top:135px;width:1px;height:2px"></i>
<i style="left:1388px;top:130px;width:1px;height:7px"></i>
<i style="left:1399px;top:135px;width:1px;height:2px"></i>
<i style="left:1410px;top:135px;width:1px;height:2px"></i>
<i style="left:1421px;top:135px;width:1px;height:2px"></i>
<i style="left:1432px;top:135px;width:1px;height:2px"></i>
<i style="left:1443px;top:134px;width:1px;height:3px"></i>
<i style="left:47px;top:959px;width:2px;height:1px"></i>
<i style="left:47px;top:948px;width:2px;height:1px"></i>
<i style="left:47px;top:937px;width:2px;height:1px"></i>
<i style="left:46px;top:926px;width:3px;height:1px"></i>
<i style="left:47px;top:915px;width:2px;height:1px"></i>
<i style="left:47px;top:904px;width:2px;height:1px"></i>
<i style="left:47px;top:893px;width:2px;height:1px"></i>
<i style="left:47px;top:882px;width:2px;height:1px"></i>
<i style="left:45px;top:871px;width:4px;height:1px"></i>
<b class="vl" style="top:851px">0</b>
<i style="left:47px;top:860px;width:2px;height:1px"></i>
<i style="left:47px;top:849px;width:2px;height:1px"></i>
<i style="left:47px;top:838px;width:2px;height:1px"></i>
<i style="left:47px;top:827px;width:2px;height:1px"></i>
<i style="left:46px;top:816px;width:3px;height:1px"></i>
<i style="left:47px;top:806px;width:2px;height:1px"></i>
<i style="left:47px;top:795px;width:2px;height:1px"></i>
<i style="left:47px;top:784px;width:2px;height:1px"></i>
<i style="left:47px;top:773px;width:2px;height:1px"></i>
<i style="left:45px;top:762px;width:4px;height:1px"></i>
<b class="vl" style="top:742px">50</b>
<i style="left:47px;top:751px;width:2px;height:1px"></i>
<i style="left:47px;top:740px;width:2px;height:1px"></i>
<i style="left:47px;top:729px;width:2px;height:1px"></i>
<i style="left:47px;top:718px;width:2px;height:1px"></i>
<i style="left:46px;top:707px;width:3px;height:1px"></i>
<i style="left:47px;top:696px;width:2px;height:1px"></i>
<i style="left:47px;top:685px;width:2px;height:1px"></i>
<i style="left:47px;top:674px;width:2px;height:1px"></i>
<i style="left:47px;top:663px;width:2px;height:1px"></i>
<i style="left:45px;top:652px;width:4px;height:1px"></i>
<b class="vl" style="top:632px">100</b>
<i style="left:47px;top:641px;width:2px;height:1px"></i>
<i style="left:47px;top:630px;width:2px;height:1px"></i>
<i style="left:47px;top:619px;width:2px;height:1px"></i>
<i style="left:47px;top:608px;width:2px;height:1px"></i>
<i style="left:46px;top:597px;width:3px;height:1px"></i>
<i style="left:47px;top:586px;width:2px;height:1px"></i>
<i style="left:47px;top:575px;width:2px;height:1px"></i>
<i style="left:47px;top:564px;width:2px;height:1px"></i>
<i style="left:47px;top:554px;width:2px;height:1px"></i>
<i style="left:45px;top:543px;width:4px;height:1px"></i>
<b class="vl" style="top:523px">150</b>
<i style="left:47px;top:532px;width:2px;height:1px"></i>
<i style="left:47px;top:521px;width:2px;height:1px"></i>
<i style="left:47px;top:510px;width:2px;height:1px"></i>
<i style="left:47px;top:499px;width:2px;height:1px"></i>
<i style="left:46px;top:488px;width:3px;height:1px"></i>
<i style="left:47px;top:477px;width:2px;height:1px"></i>
<i style="left:47px;top:466px;width:2px;height:1px"></i>
<i style="left:47px;top:455px;width:2px;height:1px"></i>
<i style="left:47px;top:444px;width:2px;height:1px"></i>
<i style="left:45px;top:433px;width:4px;height:1px"></i>
<b class="vl" style="top:413px">200</b>
<i style="left:47px;top:422px;width:2px;height:1px"></i>
<i style="left:47px;top:411px;width:2px;height:1px"></i>
<i style="left:47px;top:400px;width:2px;height:1px"></i>
<i style="left:47px;top:389px;width:2px;height:1px"></i>
<i style="left:46px;top:378px;width:3px;height:1px"></i>
<i style="left:47px;top:367px;width:2px;height:1px"></i>
<i style="left:47px;top:356px;width:2px;height:1px"></i>
<i style="left:47px;top:345px;width:2px;height:1px"></i>
<i style="left:47px;top:334px;width:2px;height:1px"></i>
<i style="left:45px;top:323px;width:4px;height:1px"></i>
<b class="vl" style="top:303px">250</b>
<i style="left:47px;top:312px;width:2px;height:1px"></i>
<i style="left:47px;top:302px;width:2px;height:1px"></i>
<i style="left:47px;top:291px;width:2px;height:1px"></i>
<i style="left:47px;top:280px;width:2px;height:1px"></i>
<i style="left:46px;top:269px;width:3px;height:1px"></i>
<i style="left:47px;top:258px;width:2px;height:1px"></i>
<i style="left:47px;top:247px;width:2px;height:1px"></i>
<i style="left:47px;top:236px;width:2px;height:1px"></i>
<i style="left:47px;top:225px;width:2px;height:1px"></i>
<i style="left:45px;top:214px;width:4px;height:1px"></i>
<b class="vl" style="top:194px">300</b>
<i style="left:47px;top:203px;width:2px;height:1px"></i>
<i style="left:47px;top:192px;width:2px;height:1px"></i>
<i style="left:47px;top:181px;width:2px;height:1px"></i>
<i style="left:47px;top:170px;width:2px;height:1px"></i>
<i style="left:46px;top:159px;width:3px;height:1px"></i>
<i style="left:47px;top:148px;width:2px;height:1px"></i>
<div class="t" style="left:1390px;top:121px;font-size:10px;letter-spacing:-0.3px;color:#111">миллиметры</div>
<div class="t" style="left:12px;top:934px;width:60px;font-size:10px;letter-spacing:-0.75px;color:#111;transform:rotate(-90deg);transform-origin:30px 5px">миллиметры</div>
<svg style="left:36px;top:125px" width="12" height="11" viewBox="0 0 12 11"><path d="M0 2.5 H3 M5 2.5 H6.5 M8.5 2.5 H10 M2.5 0 V1.5 M2.5 3.5 V5 M2.5 6.5 V8" stroke="#000" stroke-width="0.9"/><path d="M3.5 3.5 L8.5 8.5" stroke="#000" stroke-width="0.9"/><path d="M9.5 9.5 L9.5 5.5 L5.5 9.5Z" fill="#000"/></svg>
</div>
<!-- canvas -->
<div class="a" style="left:51px;top:139px;width:1381px;height:814px;background:#fff"></div>
<!-- page -->
<div class="a" style="left:517px;top:224px;width:461px;height:653px;background:#b4b4b4"></div>
<div class="a" style="left:511px;top:220px;width:461px;height:653px;background:#fff;border:1px solid #9a9a9a"></div>
<!-- cursor -->
<svg style="left:1013px;top:492px" width="12" height="20" viewBox="0 0 12 20"><path d="M0 0 L10.5 10 L7 11 L10.5 18.5 L7 19.5 L3.5 12.5 L0 15.5 Z" fill="#000"/></svg>
<!-- ruler cursor markers -->
<div class="a" style="left:1013px;top:121px;width:1px;height:3px;background:#000"></div><div class="a" style="left:1013px;top:127px;width:1px;height:3px;background:#000"></div><div class="a" style="left:1013px;top:133px;width:1px;height:3px;background:#000"></div><div class="a" style="left:33px;top:492px;width:3px;height:1px;background:#000"></div><div class="a" style="left:39px;top:492px;width:3px;height:1px;background:#000"></div><div class="a" style="left:45px;top:492px;width:3px;height:1px;background:#000"></div>
<!-- vertical scrollbar -->
<div class="a" style="left:1432px;top:139px;width:17px;height:814px;background:#f5f4ef"></div>
<div class="a" style="left:1433px;top:140px;width:15px;height:16px;background:linear-gradient(135deg,#dce6fd,#b6cbf8);border:1px solid #b4c8f5;border-radius:2px"></div><svg style="left:1433px;top:140px" width="15" height="16" viewBox="0 0 15 16"><path d="M4.0 10.0 L7.5 6.5 L11.0 10.0" fill="none" stroke="#4d6185" stroke-width="2"/></svg><div class="a" style="left:1432px;top:330px;width:16px;height:431px;background:linear-gradient(90deg,#c9d8fc,#bccffb 50%,#b4c8f8);border:1px solid #a8bdf0;border-radius:2px"></div><svg style="left:1436px;top:542px" width="8" height="7" viewBox="0 0 8 7"><path d="M1 0.5H7M1 2.5H7M1 4.5H7M1 6.5H7" stroke="#8ea6e0"/></svg><div class="a" style="left:1433px;top:937px;width:15px;height:15px;background:linear-gradient(135deg,#dce6fd,#b6cbf8);border:1px solid #b4c8f5;border-radius:2px"></div><svg style="left:1433px;top:937px" width="15" height="15" viewBox="0 0 15 15"><path d="M4.0 5.5 L7.5 9.0 L11.0 5.5" fill="none" stroke="#4d6185" stroke-width="2"/></svg>
<!-- page nav row -->
<div class="a" style="left:50px;top:953px;width:701px;height:1px;background:#a9a694"></div><div class="a" style="left:750px;top:953px;width:1px;height:17px;background:#a9a694"></div><div class="a" style="left:751px;top:953px;width:681px;height:1px;background:#f4f2ea"></div>
<div class="a" style="left:50px;top:954px;width:1399px;height:16px;background:#ece9d8"></div>
<svg style="left:53px;top:955px" width="11" height="12" viewBox="0 0 11 12"><path d="M0.5 0.5 H7 L10.5 4 V11.5 H0.5Z" fill="#fff" stroke="#222"/><path d="M5.5 4 V10 M2.5 7 H8.5" stroke="#222" stroke-width="1.2"/></svg><svg style="left:71px;top:956px" width="8" height="10" viewBox="0 0 8 10"><rect x="0" y="0" width="1.3" height="10" fill="#8a8a8a"/><path d="M8 0 V10 L2.5 5Z" fill="#8a8a8a"/></svg><svg style="left:91px;top:956px" width="6" height="10" viewBox="0 0 6 10"><path d="M6 0 V10 L0.5 5Z" fill="#8a8a8a"/></svg><div class="t" style="left:119px;top:957px;font-size:12px;color:#222;letter-spacing:0.6px">1 из 1</div><svg style="left:178px;top:956px" width="6" height="10" viewBox="0 0 6 10"><path d="M0 0 V10 L5.5 5Z" fill="#8a8a8a"/></svg><svg style="left:193px;top:956px" width="8" height="10" viewBox="0 0 8 10"><path d="M0 0 V10 L5.5 5Z" fill="#8a8a8a"/><rect x="6.7" y="0" width="1.3" height="10" fill="#8a8a8a"/></svg><svg style="left:209px;top:955px" width="11" height="12" viewBox="0 0 11 12"><path d="M0.5 0.5 H7 L10.5 4 V11.5 H0.5Z" fill="#fff" stroke="#222"/><path d="M5.5 4 V10 M2.5 7 H8.5" stroke="#222" stroke-width="1.2"/></svg><svg style="left:224px;top:953px" width="101" height="17" viewBox="0 0 101 17"><path d="M0.5 17 V0.5 H91 L99.5 9 V17" fill="#fff" stroke="#a9a694"/></svg><div class="t" style="left:239px;top:957px;font-size:12px;color:#222;letter-spacing:0.3px">Страница 1</div>
<div class="a" style="left:745px;top:956px;width:2px;height:2px;background:#9a9787"></div><div class="a" style="left:745px;top:960px;width:2px;height:2px;background:#9a9787"></div><div class="a" style="left:745px;top:964px;width:2px;height:2px;background:#9a9787"></div><div class="a" style="left:752px;top:954px;width:15px;height:16px;background:linear-gradient(135deg,#dce6fd,#b6cbf8);border:1px solid #b4c8f5;border-radius:2px"></div><svg style="left:752px;top:954px" width="15" height="16" viewBox="0 0 15 16"><path d="M9.5 4.5 L6.0 8.0 L9.5 11.5" fill="none" stroke="#4d6185" stroke-width="2"/></svg><div class="a" style="left:769px;top:954px;width:643px;height:16px;background:linear-gradient(#c9d8fc,#bccffb 50%,#b4c8f8);border:1px solid #a8bdf0;border-radius:2px"></div><svg style="left:1087px;top:958px" width="7" height="8" viewBox="0 0 7 8"><path d="M0.5 1V7M2.5 1V7M4.5 1V7M6.5 1V7" stroke="#8ea6e0"/></svg><div class="a" style="left:1414px;top:954px;width:16px;height:16px;background:linear-gradient(135deg,#dce6fd,#b6cbf8);border:1px solid #b4c8f5;border-radius:2px"></div><svg style="left:1414px;top:954px" width="16" height="16" viewBox="0 0 16 16"><path d="M6.0 4.5 L9.5 8.0 L6.0 11.5" fill="none" stroke="#4d6185" stroke-width="2"/></svg><svg style="left:1432px;top:953px" width="16" height="16" viewBox="0 0 16 16"><circle cx="6" cy="6" r="4.8" fill="#f4f4f8" stroke="#333" stroke-width="1.3"/><circle cx="6" cy="6" r="1.8" fill="none" stroke="#333"/><path d="M6 1.5V3 M6 9V10.5 M1.5 6H3 M9 6H10.5" stroke="#333"/><path d="M9.5 9.5 L14 14" stroke="#222" stroke-width="2.2"/></svg>
<!-- docker -->
<div class="a" style="left:1450px;top:118px;width:1px;height:853px;background:#cdc9b8"></div>
<div class="a" style="left:1451px;top:118px;width:209px;height:20px;background:#d6d2c2"></div>
<div class="t" style="left:1458px;top:123px;font-size:11px;color:#222">Советы</div>
<svg style="left:1603px;top:123px" width="10" height="8" viewBox="0 0 10 8"><path d="M0.5 0.5 L4 4 L0.5 7.5 M5 0.5 L8.5 4 L5 7.5" fill="none" stroke="#555" stroke-width="1.6"/></svg><svg style="left:1624px;top:125px" width="10" height="5" viewBox="0 0 10 5"><path d="M0 5 L5 0 L10 5Z" fill="#555"/></svg><svg style="left:1644px;top:124px" width="9" height="8" viewBox="0 0 9 8"><path d="M0.5 0.5 L8.5 7.5 M8.5 0.5 L0.5 7.5" stroke="#555" stroke-width="1.6"/></svg>
<div class="a" style="left:1453px;top:139px;width:181px;height:807px;background:#fff;border-left:1px solid #e4e1d2"></div>
<div class="docker">
<div class="t" style="left:1458px;top:142px;font-size:21px;font-weight:bold;color:#ec9b3f;letter-spacing:-0.5px">Советы</div>
<svg style="left:1609px;top:145px" width="18" height="18" viewBox="0 0 18 18"><path d="M1 10 L9 3 L16 7 L8 14Z" fill="#6e6e9a" stroke="#333" stroke-width="1"/><path d="M1 10 L1 12 L8 16.5 L16 9.5 L16 7 L8 14Z" fill="#e0e0f0" stroke="#333" stroke-width="1"/><path d="M8 6.5 Q10 5.5 10.5 7 Q10.5 8 9 8.5 M9 10 V10.5" stroke="#fff" stroke-width="1.3" fill="none"/></svg>
<div class="a" style="left:1456px;top:168px;width:175px;height:1px;background:#3a3a78"></div>
<div class="t" style="top:178px;font-size:13px;font-weight:bold;color:#111;letter-spacing:0.5px">Добро пожаловать в</div>
<div class="t" style="top:192px;font-size:13px;font-weight:bold;color:#111;letter-spacing:0.6px">раздел «Советы»!</div>
<div class="t" style="top:215px">Для отображения разделов</div>
<div class="t" style="top:229px">выберите инструмент или</div>
<div class="t" style="top:243px">выполните с его помощью</div>
<div class="t" style="top:257px">действие. Для получения</div>
<div class="t" style="top:271px">дополнительной информации об</div>
<div class="t" style="top:285px">активном инструменте нажмите</div>
<div class="t" style="top:299px">кнопку <b>Справка</b> в правом</div>
<div class="t" style="top:313px">верхнем углу окна настройки</div>
<div class="t" style="top:327px"><b>Советы</b>.</div>
<div class="t" style="top:347px">Ниже приведены некоторые</div>
<div class="t" style="top:361px">полезные разделы.</div>
</div>
<div class="links">
<b style="top:384px"></b><div class="t" style="top:381px">Рисование линий</div>
<b style="top:400px"></b><div class="t" style="top:397px">Рисование фигур</div>
<b style="top:416px"></b><div class="t" style="top:413px">Выбор объектов</div>
<b style="top:432px"></b><div class="t" style="top:429px">Перемещение,</div>
<div class="t" style="top:443px">масштабирование и</div>
<div class="t" style="top:457px">растягивание объектов</div>
<b style="top:476px"></b><div class="t" style="top:473px">Поворот и наклон объектов</div>
<b style="top:492px"></b><div class="t" style="top:489px">Формирование объектов</div>
<b style="top:508px"></b><div class="t" style="top:505px">Применение специальных</div>
<div class="t" style="top:519px">эффектов для объектов</div>
<b style="top:538px"></b><div class="t" style="top:535px">Создание абрисов для</div>
<div class="t" style="top:549px">объектов</div>
<b style="top:568px"></b><div class="t" style="top:565px">Заливка объектов</div>
<b style="top:584px"></b><div class="t" style="top:581px">Добавление текста</div>
<b style="top:600px"></b><div class="t" style="top:597px">Получение справки</div>
</div>
<div class="a" style="left:1472px;top:616px;width:144px;height:93px;border-radius:5px;background:repeating-linear-gradient(#c8b090 0,#c8b090 1px,#f6f0e6 1px,#f6f0e6 2px)"></div><svg style="left:1472px;top:616px" width="144" height="93" viewBox="0 0 144 93"><path d="M83 0 H99 V20 H87 Q83 20 83 16Z" fill="#fff"/><path d="M122 0 H144 V29 L136 39 L126 54 L116 68 L110 82 L118 93 H95 L103 84 L111 64 L117 44 L120 24Z" fill="#fff"/></svg><svg style="left:1500px;top:620px" width="60" height="90" viewBox="0 0 60 90"><defs><filter id="sh" x="-20%" y="-20%" width="160%" height="160%"><feGaussianBlur stdDeviation="1.6"/></filter></defs><path d="M10 8 L10 62 L24 50 L37 84 L48 82 L37 48 L50 45 Z" fill="#4a3a20" opacity="0.6" filter="url(#sh)"/><path d="M7 4 L7 58 L21 46.5 L34 80 L45 78 L34 44 L47 41 Z" fill="#f7941e" stroke="#fff" stroke-width="2.5" stroke-dasharray="3 2"/></svg>
<div class="a" style="left:1455px;top:947px;width:22px;height:22px;background:#eeeeea;border:2px solid #45535e;border-radius:3px"></div><svg style="left:1455px;top:947px" width="22" height="22" viewBox="0 0 22 22"><path d="M4 10 L11 4 L18 10 M6 9 V17 H16 V9" fill="none" stroke="#333" stroke-width="1.4"/><rect x="7" y="12" width="8" height="4.5" fill="#d4d4dc"/><path d="M6 4 V8" stroke="#333" stroke-width="1.2"/></svg><div class="a" style="left:1586px;top:948px;width:22px;height:21px;background:#f0eee4;border:1px solid #dedbcc;border-radius:3px"></div><svg style="left:1586px;top:948px" width="22" height="21" viewBox="0 0 22 21"><path d="M3 10.5 L9 5 V8 H18 V13 H9 V16Z" fill="#dcdcdc" stroke="#cfcfcf"/></svg><div class="a" style="left:1610px;top:948px;width:22px;height:21px;background:#f0eee4;border:1px solid #dedbcc;border-radius:3px"></div><svg style="left:1610px;top:948px" width="22" height="21" viewBox="0 0 22 21"><path d="M19 10.5 L13 5 V8 H4 V13 H13 V16Z" fill="#dcdcdc" stroke="#cfcfcf"/></svg>
<!-- docker tabs -->
<div class="a" style="left:1635px;top:139px;width:1px;height:832px;background:#c4c1b1"></div>
<div class="a" style="left:1636px;top:141px;width:21px;height:131px;background:#f1efe6;border:1px solid #d4d1c2;border-radius:0 6px 6px 0;border-left:none"></div><svg style="left:1637px;top:146px" width="16" height="16" viewBox="0 0 16 16"><circle cx="2.5" cy="3" r="1.8" fill="none" stroke="#444"/><path d="M4 3 H6" stroke="#444"/><rect x="6.5" y="1.5" width="4" height="4" fill="#777" stroke="#444"/><path d="M2.5 5V15 M7 8 L9 10 L7 12" stroke="#444" stroke-dasharray="1 1.2" fill="none"/><rect x="11.5" y="3.5" width="2.5" height="2.5" fill="none" stroke="#444"/><rect x="11" y="7.5" width="4" height="4" fill="#777" stroke="#444"/><circle cx="12.8" cy="14" r="1.4" fill="none" stroke="#444"/></svg><div class="t" style="left:1589px;top:212px;width:110px;height:12px;font-size:11px;letter-spacing:0.25px;color:#666;transform:rotate(90deg);transform-origin:55px 6px;text-align:left">Диспетчер объектов</div><div class="a" style="left:1636px;top:274px;width:23px;height:88px;background:#f8f7f2;border:1px solid #d4d1c2;border-radius:0 6px 6px 0;border-left:none"></div><svg style="left:1639px;top:277px" width="16" height="16" viewBox="0 0 16 16"><path d="M1 1 L1 12 L3.5 9.5 L6 14.5 L8 13.5 L5.5 8.5 L9 8.5Z" fill="#eef0fa" stroke="#5a6274" stroke-width="1"/><path d="M10 3.5 Q10 0.8 12.5 0.8 Q15 0.8 15 3.3 Q15 5 13 6 V8 M13 10 V11" stroke="#333" stroke-width="1.4" fill="none"/></svg><div class="t" style="left:1622px;top:316px;width:50px;height:12px;font-size:12px;color:#111;transform:rotate(90deg);transform-origin:25px 6px">Советы</div><svg style="left:1642px;top:345px" width="10" height="10" viewBox="0 0 10 10"><path d="M1 1 L9 9 M9 1 L1 9" stroke="#8a8a7a" stroke-width="1.8"/></svg><svg style="left:1636px;top:360px" width="23" height="8" viewBox="0 0 23 8"><path d="M0 7.5 L4 4.5 H18 L22.5 0.5" fill="none" stroke="#d4d1c2"/></svg>
<!-- palette -->
<div class="a" style="left:1659px;top:118px;width:1px;height:853px;background:#c4c1b1"></div>
<div class="a" style="left:1665px;top:123px;width:2px;height:1px;background:#a19e8f"></div><div class="a" style="left:1669px;top:123px;width:2px;height:1px;background:#a19e8f"></div><div class="a" style="left:1673px;top:123px;width:2px;height:1px;background:#a19e8f"></div><svg style="left:1662px;top:127px" width="16" height="16" viewBox="0 0 16 16"><circle cx="8" cy="8" r="7" fill="#f6f6f8" stroke="#c8c8c8"/><path d="M6 4.5 V11.5 L11.5 8Z" fill="#111"/></svg><div class="a" style="left:1662px;top:144px;width:16px;height:16px;background:#f0eee4;border:1px solid #e0ddd0;border-radius:2px"></div><svg style="left:1662px;top:144px" width="16" height="16" viewBox="0 0 16 16"><path d="M4 10 L8 6 L12 10" fill="none" stroke="#c8c8c0" stroke-width="1.8"/></svg><svg style="left:1662px;top:162px" width="16" height="16" viewBox="0 0 16 16"><rect x="0.5" y="0.5" width="15" height="15" fill="#000"/><rect x="2" y="2" width="12" height="12" fill="#fff"/><path d="M2 2 L14 14 M14 2 L2 14" stroke="#222" stroke-width="0.9"/></svg>
<div class="a" style="left:1661px;top:178px;width:18px;height:749px;background:#3a3a3a"></div>
<div class="a" style="left:1662px;top:179px;width:16px;height:17px;background:#25221f;border-top:1px solid rgba(0,0,0,.35)"></div>
<div class="a" style="left:1662px;top:196px;width:16px;height:17px;background:#3a3735;border-top:1px solid rgba(0,0,0,.35)"></div>
<div class="a" style="left:1662px;top:213px;width:16px;height:17px;background:#4b4847;border-top:1px solid rgba(0,0,0,.35)"></div>
<div class="a" style="left:1662px;top:230px;width:16px;height:17px;background:#5c5a59;border-top:1px solid rgba(0,0,0,.35)"></div>
<div class="a" style="left:1662px;top:247px;width:16px;height:17px;background:#6e6c6b;border-top:1px solid rgba(0,0,0,.35)"></div>
<div class="a" style="left:1662px;top:264px;width:16px;height:17px;background:#807e7e;border-top:1px solid rgba(0,0,0,.35)"></div>
<div class="a" style="left:1662px;top:281px;width:16px;height:17px;background:#939292;border-top:1px solid rgba(0,0,0,.35)"></div>
<div class="a" style="left:1662px;top:298px;width:16px;height:17px;background:#a6a5a5;border-top:1px solid rgba(0,0,0,.35)"></div>
<div class="a" style="left:1662px;top:315px;width:16px;height:17px;background:#bababa;border-top:1px solid rgba(0,0,0,.35)"></div>
<div class="a" style="left:1662px;top:332px;width:16px;height:17px;background:#d2d2d2;border-top:1px solid rgba(0,0,0,.35)"></div>
<div class="a" style="left:1662px;top:349px;width:16px;height:17px;background:#ffffff;border-top:1px solid rgba(0,0,0,.35)"></div>
<div class="a" style="left:1662px;top:366px;width:16px;height:17px;background:#2a1a7e;border-top:1px solid rgba(0,0,0,.35)"></div>
<div class="a" style="left:1662px;top:383px;width:16px;height:16px;background:#1a88e0;border-top:1px solid rgba(0,0,0,.35)"></div>
<div class="a" style="left:1662px;top:399px;width:16px;height:17px;background:#0e8c4a;border-top:1px solid rgba(0,0,0,.35)"></div>
<div class="a" style="left:1662px;top:416px;width:16px;height:17px;background:#f8e800;border-top:1px solid rgba(0,0,0,.35)"></div>
<div class="a" style="left:1662px;top:433px;width:16px;height:17px;background:#e83a0c;border-top:1px solid rgba(0,0,0,.35)"></div>
<div class="a" style="left:1662px;top:450px;width:16px;height:17px;background:#e03078;border-top:1px solid rgba(0,0,0,.35)"></div>
<div class="a" style="left:1662px;top:467px;width:16px;height:17px;background:#a0407c;border-top:1px solid rgba(0,0,0,.35)"></div>
<div class="a" style="left:1662px;top:484px;width:16px;height:17px;background:#f07810;border-top:1px solid rgba(0,0,0,.35)"></div>
<div class="a" style="left:1662px;top:501px;width:16px;height:17px;background:#f4968c;border-top:1px solid rgba(0,0,0,.35)"></div>
<div class="a" style="left:1662px;top:518px;width:16px;height:17px;background:#786a5e;border-top:1px solid rgba(0,0,0,.35)"></div>
<div class="a" style="left:1662px;top:535px;width:16px;height:17px;background:#b8aad8;border-top:1px solid rgba(0,0,0,.35)"></div>
<div class="a" style="left:1662px;top:552px;width:16px;height:17px;background:#9484c0;border-top:1px solid rgba(0,0,0,.35)"></div>
<div class="a" style="left:1662px;top:569px;width:16px;height:17px;background:#5c7cc0;border-top:1px solid rgba(0,0,0,.35)"></div>
<div class="a" style="left:1662px;top:586px;width:16px;height:17px;background:#74589c;border-top:1px solid rgba(0,0,0,.35)"></div>
<div class="a" style="left:1662px;top:603px;width:16px;height:17px;background:#7c6e94;border-top:1px solid rgba(0,0,0,.35)"></div>
<div class="a" style="left:1662px;top:620px;width:16px;height:17px;background:#4c5a80;border-top:1px solid rgba(0,0,0,.35)"></div>
<div class="a" style="left:1662px;top:637px;width:16px;height:17px;background:#524a5c;border-top:1px solid rgba(0,0,0,.35)"></div>
<div class="a" style="left:1662px;top:654px;width:16px;height:17px;background:#5c7088;border-top:1px solid rgba(0,0,0,.35)"></div>
<div class="a" style="left:1662px;top:671px;width:16px;height:17px;background:#1a78c8;border-top:1px solid rgba(0,0,0,.35)"></div>
<div class="a" style="left:1662px;top:688px;width:16px;height:17px;background:#5ab4ec;border-top:1px solid rgba(0,0,0,.35)"></div>
<div class="a" style="left:1662px;top:705px;width:16px;height:17px;background:#94acbc;border-top:1px solid rgba(0,0,0,.35)"></div>
<div class="a" style="left:1662px;top:722px;width:16px;height:17px;background:#7c8c98;border-top:1px solid rgba(0,0,0,.35)"></div>
<div class="a" style="left:1662px;top:739px;width:16px;height:17px;background:#606a72;border-top:1px solid rgba(0,0,0,.35)"></div>
<div class="a" style="left:1662px;top:756px;width:16px;height:17px;background:#444648;border-top:1px solid rgba(0,0,0,.35)"></div>
<div class="a" style="left:1662px;top:773px;width:16px;height:17px;background:#3c5a5a;border-top:1px solid rgba(0,0,0,.35)"></div>
<div class="a" style="left:1662px;top:790px;width:16px;height:17px;background:#287068;border-top:1px solid rgba(0,0,0,.35)"></div>
<div class="a" style="left:1662px;top:807px;width:16px;height:16px;background:#4c8080;border-top:1px solid rgba(0,0,0,.35)"></div>
<div class="a" style="left:1662px;top:823px;width:16px;height:17px;background:#1c9080;border-top:1px solid rgba(0,0,0,.35)"></div>
<div class="a" style="left:1662px;top:840px;width:16px;height:17px;background:#1c9070;border-top:1px solid rgba(0,0,0,.35)"></div>
<div class="a" style="left:1662px;top:857px;width:16px;height:17px;background:#10a8c4;border-top:1px solid rgba(0,0,0,.35)"></div>
<div class="a" style="left:1662px;top:874px;width:16px;height:17px;background:#2088a4;border-top:1px solid rgba(0,0,0,.35)"></div>
<div class="a" style="left:1662px;top:891px;width:16px;height:17px;background:#90a8a0;border-top:1px solid rgba(0,0,0,.35)"></div>
<div class="a" style="left:1662px;top:908px;width:16px;height:17px;background:#a4dcc8;border-top:1px solid rgba(0,0,0,.35)"></div>
<div class="a" style="left:1662px;top:927px;width:16px;height:16px;background:linear-gradient(135deg,#dce6fd,#b6cbf8);border:1px solid #b4c8f5;border-radius:2px"></div><svg style="left:1662px;top:927px" width="16" height="16" viewBox="0 0 16 16"><path d="M4.5 6.0 L8.0 9.5 L11.5 6.0" fill="none" stroke="#4d6185" stroke-width="2"/></svg><svg style="left:1666px;top:948px" width="8" height="9" viewBox="0 0 8 9"><rect x="0" y="0" width="1.6" height="9" fill="#000"/><path d="M8 0 V9 L2.5 4.5Z" fill="#000"/></svg>
<!-- status bar -->
<div class="a" style="left:0;top:971px;width:1680px;height:2px;background:#fdfcf6"></div>
<div class="t" style="left:5px;top:999px;font-size:11px;color:#111">( 229,032; 173,124 )</div>
<div class="t" style="left:120px;top:999px;font-size:11px;color:#111;letter-spacing:0.06px">Следующий щелчок - перетаскивание/масштабирование; второй щелчок - поворот/наклон; инструмент с двойным щелчком выбирает вс...</div>
<svg style="left:1475px;top:976px" width="17" height="17" viewBox="0 0 17 17"><path d="M2 8 L8 2 L14 8 L8 14Z" fill="#fff" stroke="#333" stroke-width="1.2"/><path d="M2.5 8.5 H13.5 L8 14Z" fill="#d8782a"/><path d="M6 1 L9 4 M14 8 Q16 9 16 12" stroke="#333" fill="none"/></svg><svg style="left:1496px;top:975px" width="18" height="18" viewBox="0 0 18 18"><rect x="0.5" y="0.5" width="17" height="17" fill="#fff" stroke="#6a685c"/><path d="M1 1 L17 17 M17 1 L1 17" stroke="#111" stroke-width="1.2"/></svg><svg style="left:1479px;top:996px" width="10" height="16" viewBox="0 0 10 16"><path d="M5 1 L9 7 L7 12 H3 L1 7Z" fill="#e8e8f2" stroke="#444" stroke-width="1.1"/><path d="M5 4 V9" stroke="#444"/><rect x="1" y="13" width="8" height="2" fill="#333"/></svg><div class="a" style="left:1496px;top:995px;width:18px;height:18px;background:#25221f;border:1px solid #6a685c"></div>

</body></html>
